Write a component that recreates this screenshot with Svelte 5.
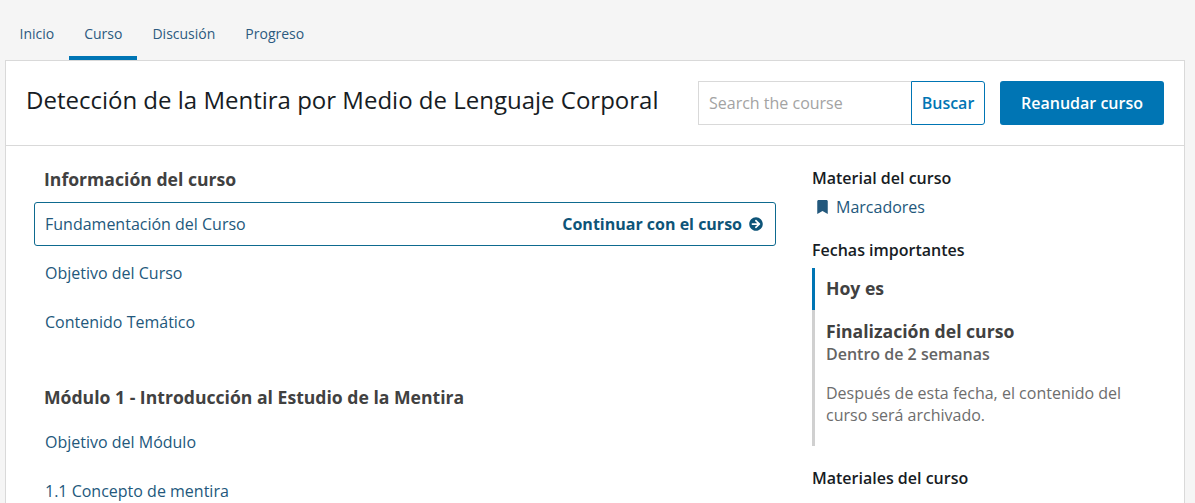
<script>
  const tabs = [
    { label: 'Inicio' },
    { label: 'Curso', active: true },
    { label: 'Discusión' },
    { label: 'Progreso' }
  ];

  const sections = [
    {
      title: 'Información del curso',
      items: ['Fundamentación del Curso', 'Objetivo del Curso', 'Contenido Temático']
    },
    {
      title: 'Módulo 1 - Introducción al Estudio de la Mentira',
      items: ['Objetivo del Módulo', '1.1 Concepto de mentira']
    }
  ];
</script>

<div class="page">
  <nav class="tabs">
    {#each tabs as tab}
      <a href="#top" class="tab" class:active={tab.active}>{tab.label}</a>
    {/each}
  </nav>

  <main class="card">
    <header class="course-header">
      <h1>Detección de la Mentira por Medio de Lenguaje Corporal</h1>
      <div class="actions">
        <form class="search">
          <input type="text" placeholder="Search the course" />
          <button type="button" class="search-btn">Buscar</button>
        </form>
        <a href="#top" class="resume">Reanudar curso</a>
      </div>
    </header>

    <div class="content">
      <section class="outline">
        {#each sections as section, s}
          <div class="section">
            <h2>{section.title}</h2>
            <ul>
              {#each section.items as item, i}
                <li class:current={s === 0 && i === 0}>
                  <a href="#top">{item}</a>
                  {#if s === 0 && i === 0}
                    <span class="continue">
                      Continuar con el curso
                      <svg viewBox="0 0 512 512" width="14" height="14" aria-hidden="true">
                        <path fill="currentColor" d="M256 8c137 0 248 111 248 248S393 504 256 504 8 393 8 256 119 8 256 8zm-28.900 143.600l75.500 72.400H120c-13.300 0-24 10.700-24 24v16c0 13.300 10.700 24 24 24h182.600l-75.500 72.400c-9.700 9.300-9.900 24.800-.4 34.300l11 10.900c9.400 9.400 24.600 9.400 33.900 0L404.300 273c9.400-9.400 9.400-24.600 0-33.900L271.600 106.300c-9.400-9.400-24.600-9.400-33.900 0l-11 10.900c-9.500 9.600-9.300 25.100.4 34.400z" />
                      </svg>
                    </span>
                  {/if}
                </li>
              {/each}
            </ul>
          </div>
        {/each}
      </section>

      <aside class="sidebar">
        <h3>Material del curso</h3>
        <a href="#top" class="bookmark">
          <svg viewBox="0 0 384 512" width="11" height="14" aria-hidden="true">
            <path fill="currentColor" d="M0 512V48C0 21.500 21.500 0 48 0h288c26.500 0 48 21.500 48 48v464L192 400 0 512z" />
          </svg>
          Marcadores
        </a>

        <h3 class="dates-title">Fechas importantes</h3>
        <div class="dates">
          <div class="today">Hoy es</div>
          <div class="deadline">
            <strong>Finalización del curso</strong>
            <span>Dentro de 2 semanas</span>
            <p>Después de esta fecha, el contenido del curso será archivado.</p>
          </div>
        </div>

        <h3 class="materials-title">Materiales del curso</h3>
      </aside>
    </div>
  </main>
</div>

<style>
  :global(body) {
    margin: 0;
    background: #f5f5f5;
    font-family: "Open Sans", sans-serif;
    overflow: hidden;
  }

  .page {
    height: 503px;
    overflow: hidden;
    padding: 0 10px 0 5px;
    box-sizing: border-box;
  }

  .tabs {
    display: flex;
    height: 60px;
    margin-left: -0.5px;
    align-items: stretch;
  }

  .tab {
    display: flex;
    align-items: center;
    padding: 10px 15px 0;
    height: 60px;
    box-sizing: border-box;
    font-size: 14px;
    color: #2c5a80;
    text-decoration: none;
    border-bottom: 4px solid transparent;
  }

  .tab.active {
    border-bottom-color: #0075b4;
  }

  .card {
    background: white;
    border: 1px solid #d9d9d9;
    min-height: 600px;
  }

  .course-header {
    display: flex;
    justify-content: space-between;
    align-items: center;
    height: 84px;
    padding: 0 20px;
    border-bottom: 1px solid #d9d9d9;
  }

  h1 {
    margin: 0 0 8px;
    font-size: 24px;
    font-weight: 400;
    color: #171c24;
    white-space: nowrap;
  }

  .actions {
    display: flex;
    gap: 15px;
  }

  .search {
    display: flex;
    margin: 0;
  }

  .search input {
    width: 213px;
    height: 44px;
    box-sizing: border-box;
    padding: 0 10px;
    border: 1px solid #d9d9d9;
    border-right: 0;
    font-family: inherit;
    font-size: 16px;
    outline: none;
  }

  .search input::placeholder {
    color: #a3a3a3;
    opacity: 1;
  }

  .search-btn {
    width: 74px;
    height: 44px;
    border: 1px solid #0075b4;
    border-radius: 0 3px 3px 0;
    background: white;
    color: #0075b4;
    font-family: inherit;
    font-size: 16px;
    font-weight: 600;
    padding: 0;
  }

  .resume {
    display: flex;
    align-items: center;
    justify-content: center;
    width: 164px;
    height: 44px;
    background: #0075b4;
    border-radius: 3px;
    color: white;
    font-size: 16px;
    font-weight: 600;
    text-decoration: none;
  }

  .content {
    display: flex;
    padding: 21px 0 0 28px;
  }

  .outline {
    width: 742px;
    flex: none;
  }

  .section {
    margin-bottom: 41px;
  }

  h2 {
    margin: 0 0 11px 10px;
    font-size: 17.6px;
    line-height: 24px;
    font-weight: 700;
    color: #414141;
  }

  ul {
    list-style: none;
    margin: 0;
    padding: 0;
  }

  li {
    display: flex;
    justify-content: space-between;
    align-items: center;
    height: 44px;
    margin-bottom: 5px;
    padding: 0 12px 0 10px;
    box-sizing: border-box;
    border: 1px solid transparent;
    border-radius: 3px;
    font-size: 16px;
  }

  li a {
    color: #23587c;
    text-decoration: none;
  }

  li.current {
    border-color: #0e6a8f;
  }

  .continue {
    display: flex;
    align-items: center;
    gap: 7px;
    font-weight: 700;
    color: #0e5478;
  }

  .sidebar {
    margin: -1px 0 0 36px;
    width: 330px;
  }

  h3 {
    margin: 0;
    font-size: 16px;
    line-height: 24px;
    font-weight: 600;
    color: #171c24;
  }

  .bookmark {
    display: flex;
    align-items: center;
    gap: 8px;
    margin: 5px 0 0 5px;
    line-height: 24px;
    font-size: 16px;
    color: #23587c;
    text-decoration: none;
  }

  .dates-title {
    margin-top: 19px;
  }

  .dates {
    margin-top: 6px;
    width: 320px;
    border-left: 3px solid #d0d0d0;
  }

  .today {
    margin-left: -3px;
    height: 42px;
    padding-left: 11px;
    border-left: 3px solid #0075b4;
    box-sizing: border-box;
    font-size: 17.6px;
    font-weight: 700;
    line-height: 40px;
    color: #414141;
  }

  .deadline {
    padding: 9px 0 20px 11px;
  }

  .deadline strong {
    display: block;
    font-size: 17.6px;
    line-height: 24px;
    color: #414141;
  }

  .deadline span {
    display: block;
    font-size: 16px;
    line-height: 22px;
    font-weight: 600;
    color: #646464;
  }

  .deadline p {
    margin: 17px 0 0;
    font-size: 16px;
    line-height: 22px;
    color: #6d6d6d;
  }

  .materials-title {
    margin-top: 20px;
  }
</style>
